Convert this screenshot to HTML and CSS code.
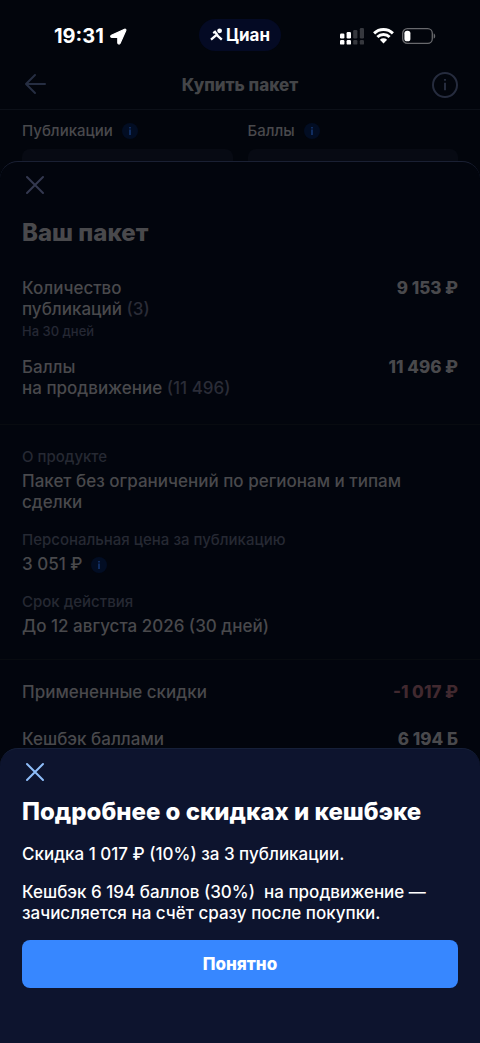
FILE: index.html
```html
<!DOCTYPE html>
<html lang="ru">
<head>
<meta charset="utf-8">
<meta name="viewport" content="width=device-width, initial-scale=1">
<title>Купить пакет</title>
<link rel="stylesheet" href="styles.css">
</head>
<body>
<div class="screen">
  <div class="page">
    <div class="status">
      <div class="status-left">
        <span class="time">19:31</span>
        <svg width="17" height="17" viewBox="0 0 17 17"><path d="M1.400 7.200 14.600 1.200c.8-.3 1.500.4 1.200 1.200L10.100 15.300c-.6 1.200-2.300.9-2.300-.5V9.400H2.200C.5 9.400.300 7.800 1.400 7.200z" fill="#fff" stroke="#fff" stroke-width="1.200" stroke-linejoin="round"/></svg>
      </div>
      <div class="brand">
        <svg width="14" height="14" viewBox="0 0 14 14"><circle cx="9.600" cy="2.800" r="2.400" fill="#fff"/><path d="M1 11.600 6.600 6.800l5.200 4.900M3.200 5.100 5 3.900l2.600 3.300" fill="none" stroke="#fff" stroke-width="2.300"/></svg>
        <span>Циан</span>
      </div>
      <div class="status-right">
        <svg width="25" height="17" viewBox="0 0 25 17"><g fill="#fff"><rect x="0" y="5.5" width="4.4" height="5" rx="1.2"/><rect x="6.6" y="4" width="4.4" height="6.5" rx="1.2"/><rect x="0" y="12" width="4.4" height="4.6" rx="1.2"/><rect x="6.6" y="12" width="4.4" height="4.6" rx="1.2"/></g><g fill="#36383e"><rect x="13.2" y="2" width="4.2" height="8.5" rx="1.2"/><rect x="19.8" y="0" width="4.2" height="10.5" rx="1.2"/><rect x="13.2" y="12" width="4.2" height="4.6" rx="1.2"/><rect x="19.8" y="12" width="4.2" height="4.6" rx="1.2"/></g></svg>
        <svg width="21" height="16" viewBox="0 0 21 16"><g fill="none" stroke="#fff" stroke-width="2.9"><path d="M1.1 5.4a13.3 13.3 0 0 1 18.800 0"/><path d="M4.400 9a8.600 8.600 0 0 1 12.200 0"/></g><path d="M10.500 15.400 6.900 11.700a5.100 5.100 0 0 1 7.200 0z" fill="#fff"/></svg>
        <svg width="34" height="16" viewBox="0 0 34 16"><rect x=".7" y=".7" width="29.6" height="14.6" rx="4.6" fill="none" stroke="#68696d" stroke-width="1.3"/><rect x="2.4" y="2.7" width="6" height="10.6" rx="2.6" fill="#fff"/><path d="M31.700 5.400c2 .6 2 4.600 0 5.200z" fill="#68696d"/></svg>
      </div>
    </div>
    <header class="header">
      <button class="icon-btn" aria-label="Назад"><svg width="26" height="24" viewBox="0 0 26 24"><path d="M23 11H4M13 2 4 11l9 9" fill="none" stroke="#262e42" stroke-width="2" stroke-linecap="round" stroke-linejoin="round"/></svg></button>
      <h1>Купить пакет</h1>
      <button class="icon-btn" aria-label="Информация"><svg width="26" height="26" viewBox="0 0 26 26"><circle cx="13" cy="13" r="12" fill="none" stroke="#262c3e" stroke-width="2"/><path d="M13 10.800v7.500M13 7v1.800" stroke="#262c3e" stroke-width="2"/></svg></button>
    </header>
    <div class="fields">
      <div class="field">
        <div class="field-label"><label for="pubs">Публикации</label><button class="hint" aria-label="О публикациях"><svg width="4" height="10" viewBox="0 0 4 10"><path d="M2 3.600V9M2 1v1.600" stroke="#102d60" stroke-width="2"/></svg></button></div>
        <input id="pubs" type="text">
      </div>
      <div class="field">
        <div class="field-label"><label for="points">Баллы</label><button class="hint" aria-label="О баллах"><svg width="4" height="10" viewBox="0 0 4 10"><path d="M2 3.600V9M2 1v1.600" stroke="#102d60" stroke-width="2"/></svg></button></div>
        <input id="points" type="text">
      </div>
    </div>
  </div>

  <section class="sheet package">
    <button class="close" aria-label="Закрыть"><svg width="24" height="24" viewBox="0 0 24 24"><path d="m4 4 16 16M20 4 4 20" fill="none" stroke="#343950" stroke-width="2" stroke-linecap="round"/></svg></button>
    <h2>Ваш пакет</h2>
    <div class="group items">
      <div class="row"><div>Количество<br>публикаций <span class="muted">(3)</span><div class="note">На 30 дней</div></div><b>9 153 ₽</b></div>
      <div class="row"><div>Баллы<br>на продвижение <span class="muted">(11 496)</span></div><b>11 496 ₽</b></div>
    </div>
    <dl class="group about">
      <div><dt>О продукте</dt><dd>Пакет без ограничений по регионам и типам сделки</dd></div>
      <div><dt>Персональная цена за публикацию</dt><dd class="price">3 051 ₽<button class="hint" aria-label="О цене"><svg width="4" height="10" viewBox="0 0 4 10"><path d="M2 3.600V9M2 1v1.600" stroke="#102d60" stroke-width="2"/></svg></button></dd></div>
      <div><dt>Срок действия</dt><dd>До 12 августа 2026 (30 дней)</dd></div>
    </dl>
    <div class="group totals">
      <div class="row"><div>Примененные скидки</div><b class="discount">-1 017 ₽</b></div>
      <div class="row"><div>Кешбэк баллами</div><b>6 194 Б</b></div>
    </div>
  </section>

  <section class="sheet details" role="dialog" aria-labelledby="details-title">
    <button class="close" aria-label="Закрыть"><svg width="24" height="24" viewBox="0 0 24 24"><path d="m4 4 16 16M20 4 4 20" fill="none" stroke="#8fbdf8" stroke-width="2" stroke-linecap="round"/></svg></button>
    <h2 id="details-title">Подробнее о скидках и кешбэке</h2>
    <p>Скидка 1 017 ₽ (10%) за 3 публикации.</p>
    <p>Кешбэк 6 194 баллов (30%)&nbsp; на продвижение — зачисляется на счёт сразу после покупки.</p>
    <button class="primary">Понятно</button>
  </section>
</div>
</body>
</html>
```
FILE: styles.css
```css
* { box-sizing: border-box; margin: 0; }
body { background: #02050c; color: #49494c; font: 500 17px/21px Inter, "Noto Sans", sans-serif; }
button { border: 0; padding: 0; background: none; color: inherit; font: inherit; }
svg { display: block; }
.screen { display: grid; min-height: 100vh; grid-template-columns: minmax(0, 1fr); }
.page, .sheet { grid-area: 1 / 1; }

.status { display: grid; grid-template-columns: 1fr auto 1fr; align-items: center; padding: 18px 44px 0; height: 52px; color: #fff; }
.status-left { display: flex; align-items: center; gap: 6px; padding: 2px 0 0 10px; }
.time { font-size: 20px; font-weight: 700; }
.brand { display: flex; align-items: center; justify-content: center; gap: 2px; width: 82px; height: 32px; border-radius: 16px; background: #040a24; font-size: 17px; font-weight: 700; }
.status-right { display: flex; align-items: center; justify-content: flex-end; gap: 8px; padding-top: 2px; }

.header { display: grid; grid-template-columns: 26px 1fr 26px; align-items: center; padding: 8px 22px 0; height: 58px; border-bottom: 1px solid #0c1018; }
.header h1 { text-align: center; font-size: 17px; font-weight: 800; line-height: 24px; color: #444548; }
.fields { display: grid; grid-template-columns: 1fr 1fr; gap: 15px; padding: 11px 22px 0; }
.field-label { display: flex; align-items: center; gap: 9px; margin-bottom: 8px; font-size: 15px; line-height: 20px; }
.field input { display: block; width: 100%; height: 48px; border: 0; border-radius: 8px; background: #070a13; color: inherit; font: inherit; }
.hint { display: grid; place-items: center; width: 16px; height: 16px; border-radius: 50%; background: #020d23; }

.sheet { border-top: 1px solid; border-radius: 18px 18px 0 0; padding: 11px 22px 0; }
.package { margin-top: 161px; border-color: #1a2033; background: #02050d; }
.close { display: block; margin-left: 1px; }
.sheet h2 { font-size: 24px; font-weight: 800; line-height: 32px; }
.package h2 { margin-top: 20px; }
.group { margin: 0 -22px; padding: 22px; }
.group + .group { border-top: 1px solid #080b10; }
.row { display: flex; justify-content: space-between; gap: 16px; }
.row b { font-weight: 800; white-space: nowrap; }
.muted { color: #2a2c37; }
.note { margin-top: 2px; font-size: 13px; line-height: 18px; color: #252834; }
.items { display: grid; gap: 17px; padding: 29px 22px 25px; }
.about { display: grid; gap: 17px; }
.about dt { margin-bottom: 4px; font-size: 15px; line-height: 20px; color: #262933; }
.about dd { margin: 0; }
.about .price { display: flex; align-items: center; gap: 9px; }
.totals { display: grid; align-content: start; gap: 26px; }
.discount { color: #41292f; }

.details { align-self: end; padding-bottom: 55px; border-color: #162039; background: #0d142e; color: #fff; }
.details h2 { margin-top: 12px; margin-bottom: 16px; }
.details p + p { margin-top: 17px; }
.primary { display: block; width: 100%; height: 48px; margin-top: 16px; border-radius: 8px; background: #3787ff; font-weight: 800; }
```
